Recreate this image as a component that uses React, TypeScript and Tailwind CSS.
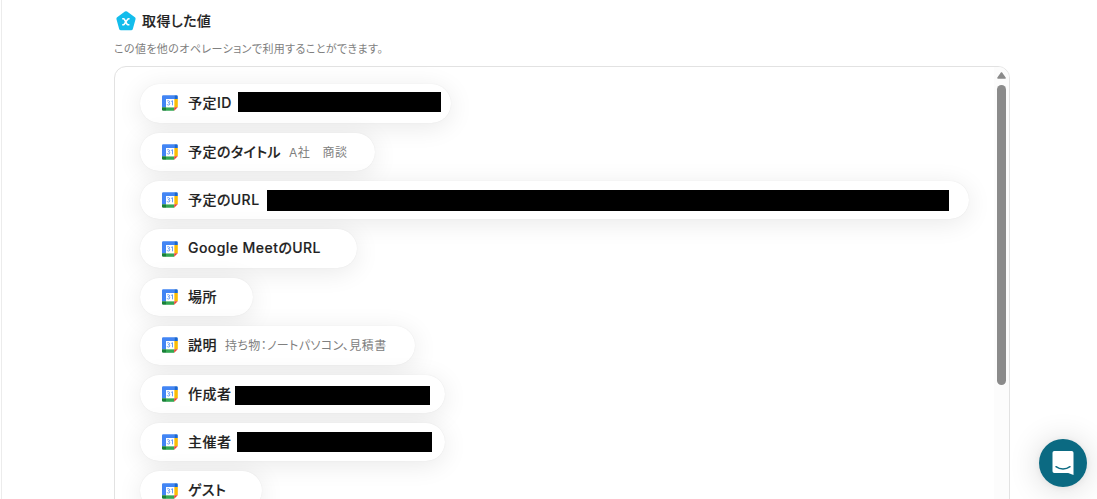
interface OutputItem {
  label: string;
  width: string;
  sample?: string;
  mask?: string;
}

const items: OutputItem[] = [
  { label: "予定ID", width: "w-[311px]", mask: "left-[98px] top-[8px] h-[20px] w-[203px]" },
  { label: "予定のタイトル", width: "w-[235px]", sample: "A社　商談" },
  { label: "予定のURL", width: "w-[829px]", mask: "left-[127px] top-[9.2px] h-[21px] w-[682px]" },
  { label: "Google MeetのURL", width: "w-[217px]" },
  { label: "場所", width: "w-[113px]" },
  { label: "説明", width: "w-[275px]", sample: "持ち物：ノートパソコン、見積書" },
  { label: "作成者", width: "w-[305px]", mask: "left-[95px] top-[11.4px] h-[19px] w-[195px]" },
  { label: "主催者", width: "w-[305px]", mask: "left-[97px] top-[9.2px] h-[20px] w-[195px]" },
  { label: "ゲスト", width: "w-[122px]" },
];

const CalendarIcon = () => (
  <svg className="h-4 w-4 shrink-0" viewBox="0 0 16 16">
    <path d="M1.2 .2H12.2v3.8H4v8.2H0V1.4A1.2 1.2 0 0 1 1.2 .2Z" fill="#4285f4" />
    <path d="M12.2 .2h2.4A1.2 1.2 0 0 1 15.8 1.4V4h-3.6Z" fill="#1967d2" />
    <path d="M12.2 4h3.6v8.2h-3.6Z" fill="#fbbc04" />
    <path d="M4 12.2h8.2v3.6H4Z" fill="#34a853" />
    <path d="M0 12.2h4v3.6H1.2A1.2 1.2 0 0 1 0 14.6Z" fill="#188038" />
    <path d="M12.2 12.2h3.6l-3.6 3.6Z" fill="#ea4335" />
    <path d="M4 4h8.2v8.2H4Z" fill="#fff" />
    <path
      d="M5.1 6.2C5.7 5.3 7.7 5.5 7.6 6.8C7.5 7.7 6.3 7.7 6.3 7.7C7.3 7.7 7.9 8.2 7.8 9C7.6 10.4 5.4 10.4 5 9.2M9.1 6.5l1.4-.8v4.6"
      fill="none"
      stroke="#4285f4"
      strokeWidth=".8"
    />
  </svg>
);

const VariableIcon = () => (
  <svg className="h-[22px] w-[22px] shrink-0" viewBox="0 0 22 22">
    <path
      d="M11 3l7.8 5.7-2.7 9.7H5.9L3.2 8.7Z"
      fill="#13bdec"
      stroke="#13bdec"
      strokeWidth="3.6"
      strokeLinejoin="round"
    />
    <path
      d="M7.2 8.8h1.2c.5 0 .8.2 1 .6l2.6 4.8c.2.4.5.6 1 .6h1.4M14.6 8.8h-.8c-.5 0-.9.3-1.2.6L9.2 14.2c-.3.4-.7.6-1.2.6h-.8"
      fill="none"
      stroke="#fff"
      strokeWidth="1.6"
    />
  </svg>
);

const OutputPill = ({ item }: { item: OutputItem }) => (
  <li
    className={`relative flex h-[38.4px] shrink-0 items-center rounded-full bg-white pl-[22px] shadow-[0_0_1px_rgba(0,0,0,0.1),0_4px_26px_rgba(0,0,0,0.09)] ${item.width}`}
  >
    <CalendarIcon />
    <span className="mb-[0.5px] ml-2.5 text-[14px] leading-5 font-medium tracking-[0.44px] whitespace-nowrap text-[#222] [-webkit-text-stroke:0.15px_#222]">
      {item.label}
    </span>
    {item.sample && (
      <span className="mt-[1.6px] ml-2 text-[12px] leading-5 tracking-[0.4px] whitespace-nowrap text-[#808080]">
        {item.sample}
      </span>
    )}
    {item.mask && <span className={`absolute bg-black ${item.mask}`} />}
  </li>
);

const App = () => {
  return (
    <div
      lang="ja"
      className="relative h-[499px] w-[1097px] overflow-hidden bg-white pt-2.5 pl-[114px] font-['Inter','Noto_Sans_CJK_JP',sans-serif] [font-feature-settings:'palt']"
    >
      <div className="absolute top-0 left-px h-full w-px bg-[#ececec]" />
      <header className="flex h-[22px] items-center">
        <div className="ml-px">
          <VariableIcon />
        </div>
        <h2 className="ml-[5px] text-[14px] leading-5 font-medium tracking-[0.42px] text-[#222] [-webkit-text-stroke:0.15px_#222]">
          取得した値
        </h2>
      </header>
      <p className="mt-2 text-[11px] leading-[18px] tracking-[0.4px] text-[#808080]">
        この値を他のオペレーションで利用することができます。
      </p>
      <section className="mt-2 flex h-[600px] w-[896px] overflow-hidden rounded-xl border border-[#e2e2e2]">
        <ul className="flex flex-1 flex-col items-start gap-2.5 pt-[17.3px] pl-[25px]">
          {items.map((item) => (
            <OutputPill key={item.label} item={item} />
          ))}
        </ul>
        <div className="relative flex w-[15px] flex-col items-center bg-[#fcfcfc] pt-[5px]">
          <svg className="h-[7px] w-[9px]" viewBox="0 0 9 7">
            <path
              d="M4.5 1L8 6H1Z"
              fill="#8b8b8b"
              stroke="#8b8b8b"
              strokeWidth="1.6"
              strokeLinejoin="round"
            />
          </svg>
          <div className="mt-[6px] h-[300px] w-[9px] rounded-full bg-[#8b8b8b]" />
        </div>
      </section>
      <button className="absolute top-[439px] left-[1039px] flex h-12 w-12 items-center justify-center rounded-full bg-[#0b6a82] shadow-[0_1px_6px_rgba(0,0,0,0.06),0_2px_32px_rgba(0,0,0,0.16)]">
        <svg className="h-6 w-[22px]" viewBox="0 0 22 24">
          <path d="M2.3 0h17.4A1.8 1.8 0 0 1 21.5 1.8V24l-5.3-2H2.3A1.8 1.8 0 0 1 .5 20.2V1.8A1.8 1.8 0 0 1 2.3 0Z" fill="#fff" />
          <path
            d="M4 15.7c4 3.1 10 3.1 14 0"
            fill="none"
            stroke="#0b6a82"
            strokeWidth="1.5"
            strokeLinecap="round"
          />
        </svg>
      </button>
    </div>
  );
};

export default App;
